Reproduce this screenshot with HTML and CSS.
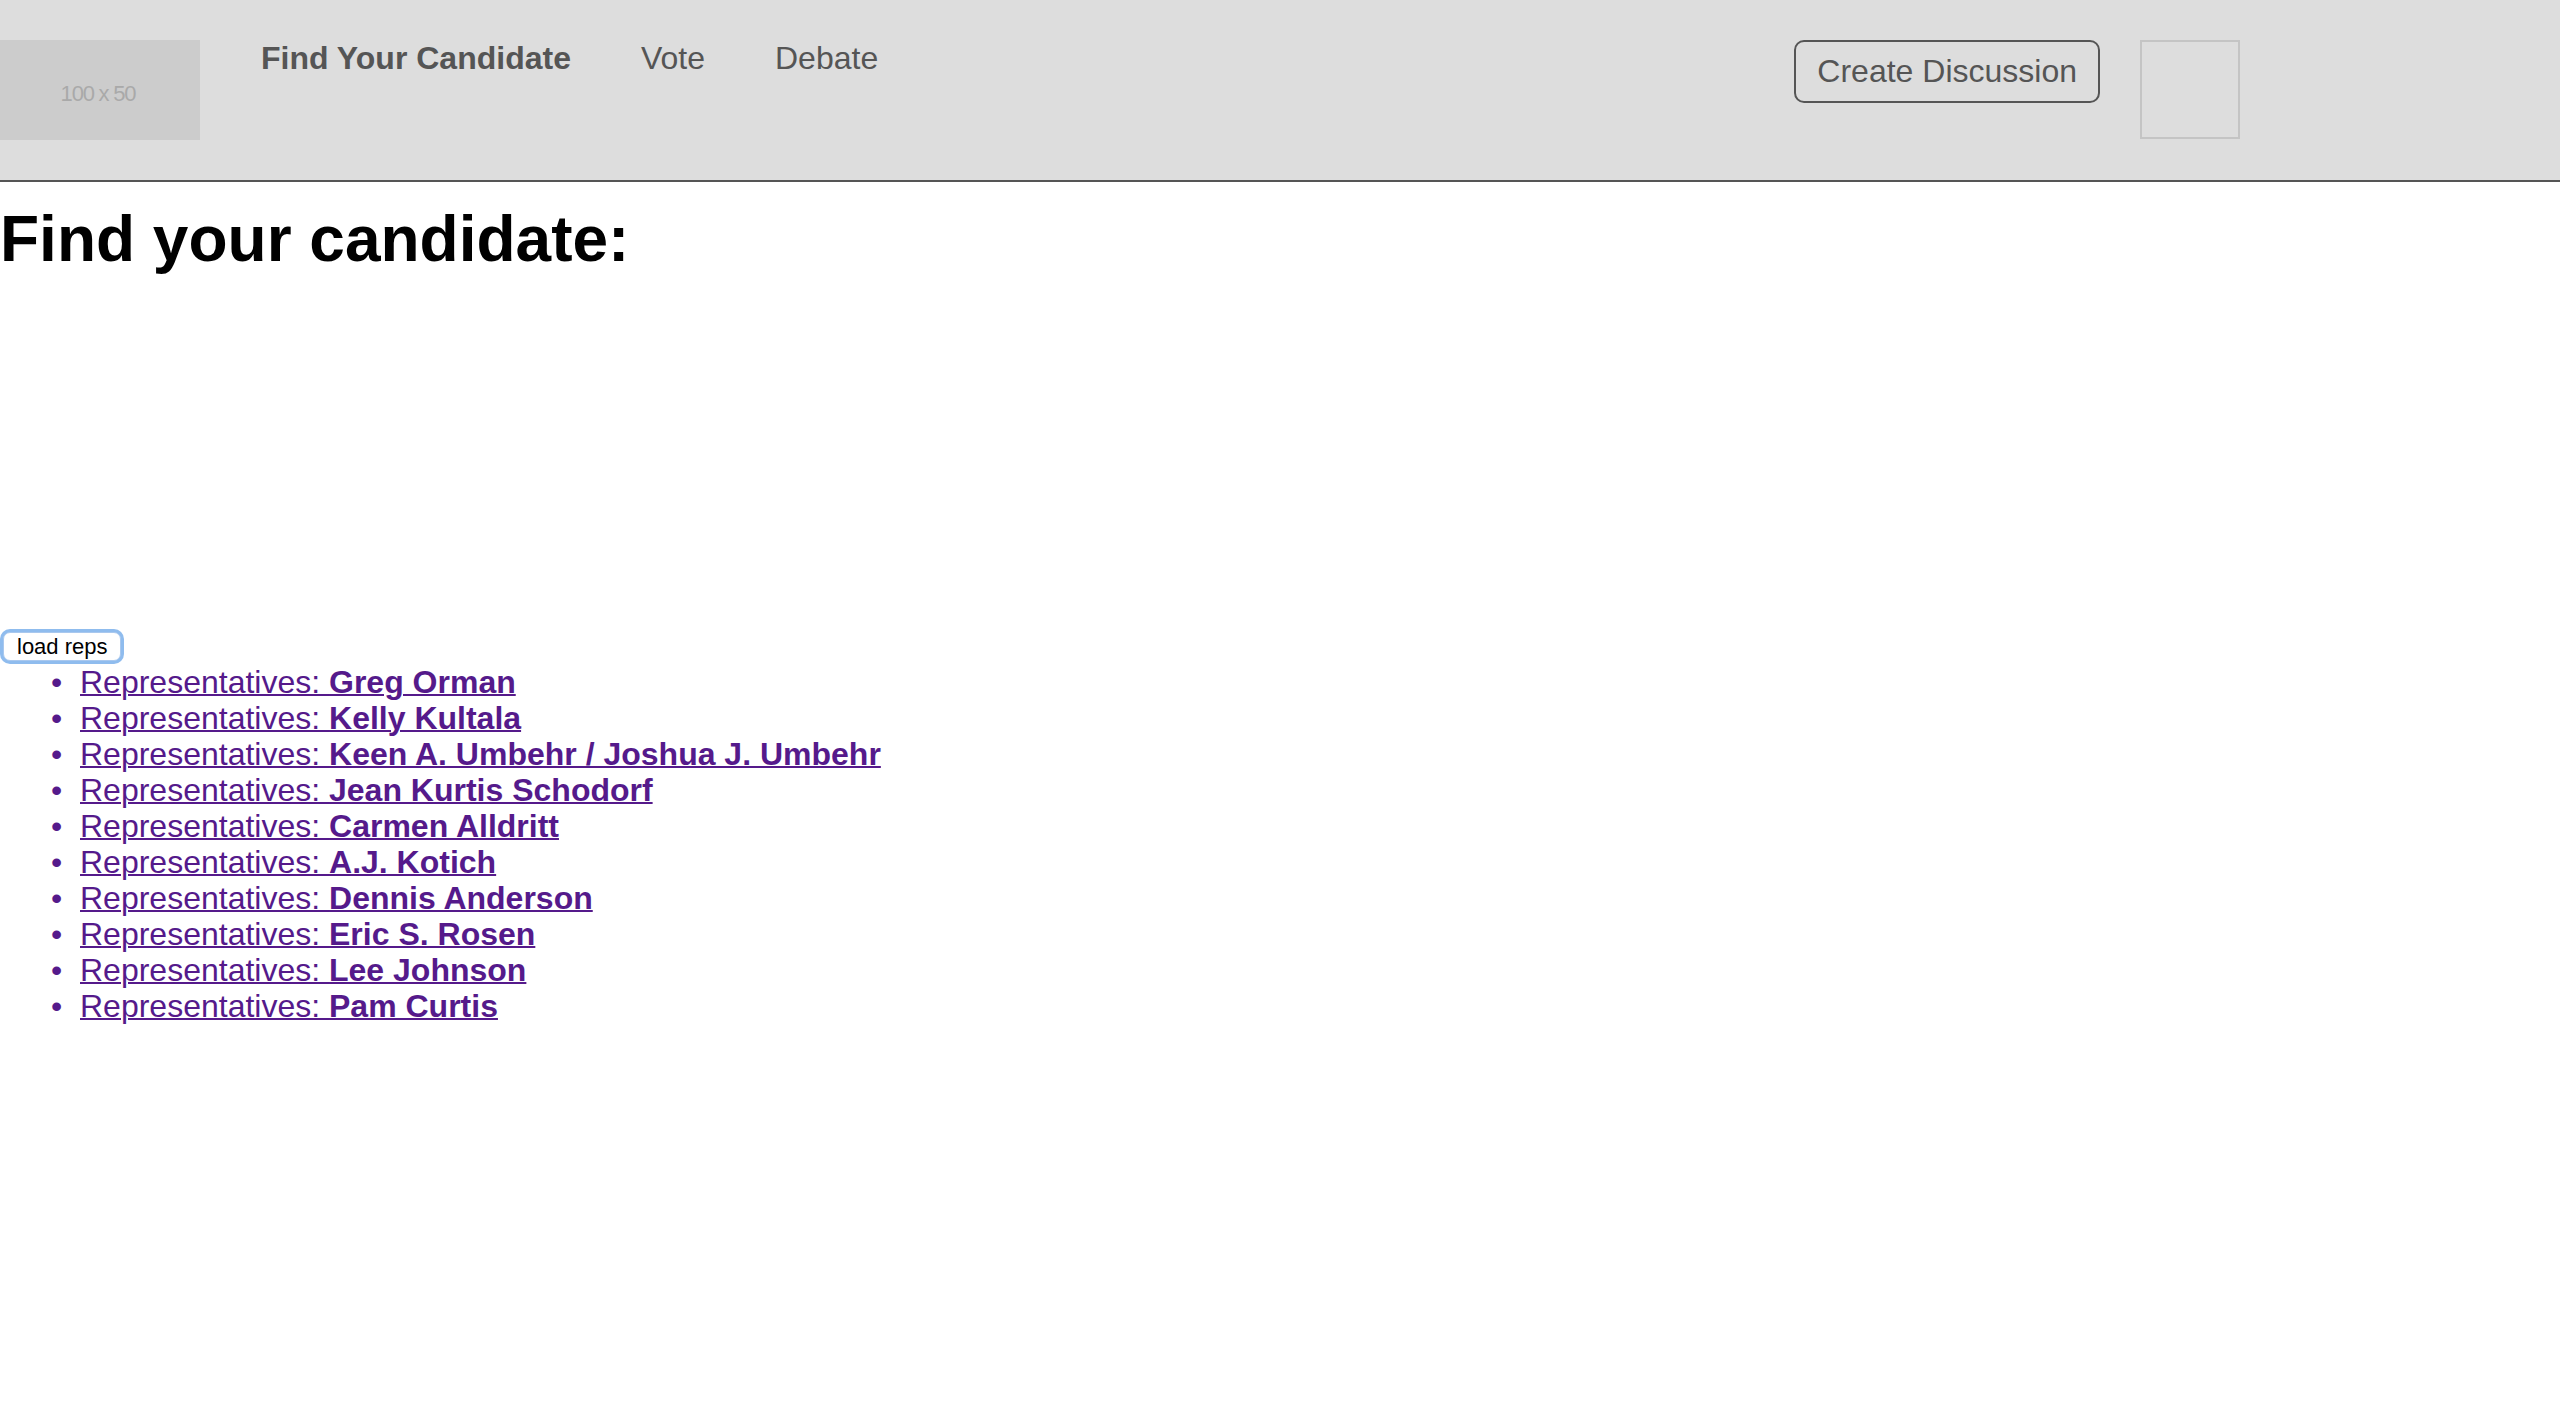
FILE: index.html
```html
<!DOCTYPE html>
<html lang="en">
<head>
<meta charset="utf-8">
<title>Find your candidate</title>
<link rel="stylesheet" href="styles.css">
</head>
<body>
<header class="topbar">
  <div class="logo"><span class="logo-text">100 x 50</span></div>
  <nav class="nav">
    <a class="nav-item nav-active" href="#">Find Your Candidate</a>
    <a class="nav-item" href="#">Vote</a>
    <a class="nav-item" href="#">Debate</a>
  </nav>
  <div class="actions">
    <button class="create-btn" type="button">Create Discussion</button>
    <div class="avatar"></div>
  </div>
</header>
<main class="main">
  <h1 class="title">Find your candidate:</h1>
  <div class="map-area"></div>
  <button class="load-btn" type="button">load reps</button>
  <ul class="reps">
    <li><a href="#">Representatives: <strong>Greg Orman</strong></a></li>
    <li><a href="#">Representatives: <strong>Kelly Kultala</strong></a></li>
    <li><a href="#">Representatives: <strong>Keen A. Umbehr / Joshua J. Umbehr</strong></a></li>
    <li><a href="#">Representatives: <strong>Jean Kurtis Schodorf</strong></a></li>
    <li><a href="#">Representatives: <strong>Carmen Alldritt</strong></a></li>
    <li><a href="#">Representatives: <strong>A.J. Kotich</strong></a></li>
    <li><a href="#">Representatives: <strong>Dennis Anderson</strong></a></li>
    <li><a href="#">Representatives: <strong>Eric S. Rosen</strong></a></li>
    <li><a href="#">Representatives: <strong>Lee Johnson</strong></a></li>
    <li><a href="#">Representatives: <strong>Pam Curtis</strong></a></li>
  </ul>
</main>
</body>
</html>
```

FILE: styles.css
```css
html, body {
  margin: 0;
  padding: 0;
  background: #fff;
}

body {
  font-family: "Liberation Sans", Arial, Helvetica, sans-serif;
  font-size: 32px;
  color: #000;
}

.topbar {
  display: flex;
  align-items: flex-start;
  box-sizing: border-box;
  height: 182px;
  padding: 40px 320px 0 0;
  background: #dddddd;
  border-bottom: 2px solid #555555;
}

.logo {
  width: 200px;
  height: 100px;
  background: #cccccc;
  display: flex;
  align-items: center;
  justify-content: center;
  flex-shrink: 0;
}

.logo-text {
  font-size: 22px;
  letter-spacing: -1.2px;
  color: #a9a9a9;
  padding-top: 7px;
  padding-right: 4px;
}

.nav {
  display: flex;
  gap: 70px;
  margin-left: 61px;
}

.nav-item {
  color: #555555;
  text-decoration: none;
  font-size: 32px;
  line-height: 37px;
}

.nav-active {
  font-weight: bold;
}

.actions {
  margin-left: auto;
  display: flex;
  align-items: flex-start;
  gap: 40px;
}

.create-btn {
  font-family: "Liberation Sans", Arial, Helvetica, sans-serif;
  font-size: 32px;
  line-height: 37px;
  color: #555555;
  background: transparent;
  border: 2px solid #555555;
  border-radius: 10px;
  padding: 11px 21px;
  margin: 0;
}

.avatar {
  width: 100px;
  height: 99px;
  box-sizing: border-box;
  border: 2px solid #c4c4c4;
}

.main {
  padding: 0;
}

.title {
  margin: 20px 0 0 0;
  font-size: 64px;
  line-height: 74px;
  font-weight: bold;
}

.map-area {
  height: 352px;
}

.load-btn {
  display: block;
  margin: 4px 0 3px 3px;
  font-family: "Liberation Sans", Arial, Helvetica, sans-serif;
  font-size: 22px;
  line-height: 25px;
  color: #000;
  background: #fff;
  border: 1px solid #a9c8ee;
  border-radius: 7px;
  padding: 1px 12px 1px 13px;
  box-shadow: 0 0 0 3px #8fbcee;
}

.reps {
  margin: 0;
  padding-left: 80px;
  color: #551a8b;
  line-height: 36px;
}

.reps li::marker {
  content: "\2022\00a0\00a0";
}

.reps a {
  color: #551a8b;
  text-decoration: underline;
  text-decoration-thickness: 2px;
}

.reps strong {
  font-weight: bold;
}
```
